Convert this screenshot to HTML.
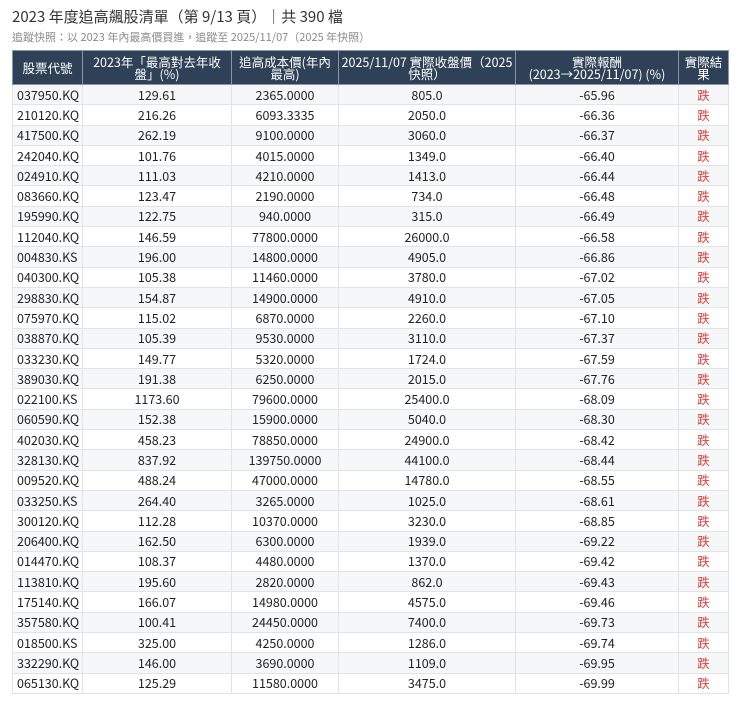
<!DOCTYPE html><html><head><meta charset="utf-8"><style>
body{margin:0;background:#fff;font-family:"Noto Sans CJK TC","Liberation Sans",sans-serif;color:#222}
.t{position:absolute;left:12px;top:6px;font-size:15px;color:#333;white-space:nowrap}
.s{position:absolute;left:12px;top:29px;font-size:11px;color:#8a8a8a;white-space:nowrap}
table{position:absolute;left:12px;top:50px;border-collapse:collapse;width:716px;table-layout:fixed;font-size:12.5px}
th{background:#2e4156;color:#fff;font-weight:normal;height:33px;line-height:12px;padding:0 6px;border:1px solid #8797a8;font-size:12.5px}
td{height:19.3px;padding:0;text-align:center;border:1px solid #e3e3e3;line-height:12px}
td:first-child{text-align:left;padding-left:4px}
tr:nth-child(even) td{background:#f6f7f8}
.r{color:#e0413b}
</style></head><body>
<div class="t">2023 年度追高飆股清單（第 9/13 頁）｜共 390 檔</div>
<div class="s">追蹤快照：以 2023 年內最高價買進，追蹤至 2025/11/07（2025 年快照）</div>
<table>
<colgroup><col style="width:70px"><col style="width:149px"><col style="width:107px"><col style="width:177px"><col style="width:163px"><col style="width:50px"></colgroup>
<tr><th>股票代號</th><th>2023年「最高對去年收盤」(%)</th><th>追高成本價(年內最高)</th><th style="padding:0 1px">2025/11/07 實際收盤價（2025<br>快照）</th><th>實際報酬<br>(2023→2025/11/07) (%)</th><th style="padding:0 4px">實際結果</th></tr>
<tr><td>037950.KQ</td><td>129.61</td><td>2365.0000</td><td>805.0</td><td>-65.96</td><td class="r">跌</td></tr>
<tr><td>210120.KQ</td><td>216.26</td><td>6093.3335</td><td>2050.0</td><td>-66.36</td><td class="r">跌</td></tr>
<tr><td>417500.KQ</td><td>262.19</td><td>9100.0000</td><td>3060.0</td><td>-66.37</td><td class="r">跌</td></tr>
<tr><td>242040.KQ</td><td>101.76</td><td>4015.0000</td><td>1349.0</td><td>-66.40</td><td class="r">跌</td></tr>
<tr><td>024910.KQ</td><td>111.03</td><td>4210.0000</td><td>1413.0</td><td>-66.44</td><td class="r">跌</td></tr>
<tr><td>083660.KQ</td><td>123.47</td><td>2190.0000</td><td>734.0</td><td>-66.48</td><td class="r">跌</td></tr>
<tr><td>195990.KQ</td><td>122.75</td><td>940.0000</td><td>315.0</td><td>-66.49</td><td class="r">跌</td></tr>
<tr><td>112040.KQ</td><td>146.59</td><td>77800.0000</td><td>26000.0</td><td>-66.58</td><td class="r">跌</td></tr>
<tr><td>004830.KS</td><td>196.00</td><td>14800.0000</td><td>4905.0</td><td>-66.86</td><td class="r">跌</td></tr>
<tr><td>040300.KQ</td><td>105.38</td><td>11460.0000</td><td>3780.0</td><td>-67.02</td><td class="r">跌</td></tr>
<tr><td>298830.KQ</td><td>154.87</td><td>14900.0000</td><td>4910.0</td><td>-67.05</td><td class="r">跌</td></tr>
<tr><td>075970.KQ</td><td>115.02</td><td>6870.0000</td><td>2260.0</td><td>-67.10</td><td class="r">跌</td></tr>
<tr><td>038870.KQ</td><td>105.39</td><td>9530.0000</td><td>3110.0</td><td>-67.37</td><td class="r">跌</td></tr>
<tr><td>033230.KQ</td><td>149.77</td><td>5320.0000</td><td>1724.0</td><td>-67.59</td><td class="r">跌</td></tr>
<tr><td>389030.KQ</td><td>191.38</td><td>6250.0000</td><td>2015.0</td><td>-67.76</td><td class="r">跌</td></tr>
<tr><td>022100.KS</td><td>1173.60</td><td>79600.0000</td><td>25400.0</td><td>-68.09</td><td class="r">跌</td></tr>
<tr><td>060590.KQ</td><td>152.38</td><td>15900.0000</td><td>5040.0</td><td>-68.30</td><td class="r">跌</td></tr>
<tr><td>402030.KQ</td><td>458.23</td><td>78850.0000</td><td>24900.0</td><td>-68.42</td><td class="r">跌</td></tr>
<tr><td>328130.KQ</td><td>837.92</td><td>139750.0000</td><td>44100.0</td><td>-68.44</td><td class="r">跌</td></tr>
<tr><td>009520.KQ</td><td>488.24</td><td>47000.0000</td><td>14780.0</td><td>-68.55</td><td class="r">跌</td></tr>
<tr><td>033250.KS</td><td>264.40</td><td>3265.0000</td><td>1025.0</td><td>-68.61</td><td class="r">跌</td></tr>
<tr><td>300120.KQ</td><td>112.28</td><td>10370.0000</td><td>3230.0</td><td>-68.85</td><td class="r">跌</td></tr>
<tr><td>206400.KQ</td><td>162.50</td><td>6300.0000</td><td>1939.0</td><td>-69.22</td><td class="r">跌</td></tr>
<tr><td>014470.KQ</td><td>108.37</td><td>4480.0000</td><td>1370.0</td><td>-69.42</td><td class="r">跌</td></tr>
<tr><td>113810.KQ</td><td>195.60</td><td>2820.0000</td><td>862.0</td><td>-69.43</td><td class="r">跌</td></tr>
<tr><td>175140.KQ</td><td>166.07</td><td>14980.0000</td><td>4575.0</td><td>-69.46</td><td class="r">跌</td></tr>
<tr><td>357580.KQ</td><td>100.41</td><td>24450.0000</td><td>7400.0</td><td>-69.73</td><td class="r">跌</td></tr>
<tr><td>018500.KS</td><td>325.00</td><td>4250.0000</td><td>1286.0</td><td>-69.74</td><td class="r">跌</td></tr>
<tr><td>332290.KQ</td><td>146.00</td><td>3690.0000</td><td>1109.0</td><td>-69.95</td><td class="r">跌</td></tr>
<tr><td>065130.KQ</td><td>125.29</td><td>11580.0000</td><td>3475.0</td><td>-69.99</td><td class="r">跌</td></tr>
</table>
</body></html>
